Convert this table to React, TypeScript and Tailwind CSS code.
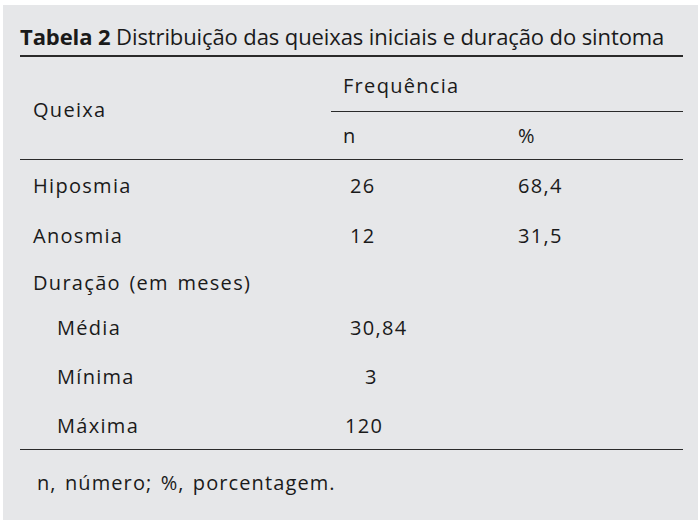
import React from "react";

export default function App() {
  const font = { fontFamily: '"Open Sans", "Liberation Sans", sans-serif' };
  return (
    <div className="w-[700px] h-[532px] bg-white pt-[5px] pl-[3px]" style={font}>
      <div className="w-[695px] h-[515px] bg-[#e6e7e9] pl-[17px] pr-[15px] text-[#1a1a1a] flex flex-col">
        <div className="h-[50px] flex items-end pb-[8px] text-[22px] leading-none whitespace-nowrap tracking-[-0.1px]">
          <span className="font-bold">Tabela 2</span>
          <span>&nbsp;Distribuição das queixas iniciais e duração do sintoma</span>
        </div>
        <div className="h-[2px] bg-[#2a2a2a]" />
        <div className="flex h-[103px] text-[20px] tracking-[1.3px] [word-spacing:2px]">
          <div className="w-[311px] pl-[13px] flex items-center pt-[3px]">Queixa</div>
          <div className="flex-1 flex flex-col">
            <div className="h-[54px] flex items-center pl-[12px] pt-[4px]">Frequência</div>
            <div className="h-px bg-[#2a2a2a]" />
            <div className="flex-1 flex items-center">
              <div className="w-[187px] pl-[12px]">n</div>
              <div>%</div>
            </div>
          </div>
        </div>
        <div className="h-px bg-[#2a2a2a]" />
        <div className="flex flex-col text-[20px] tracking-[1.3px] [word-spacing:2px]">
          <Row h="h-[51px]" label="Hiposmia" n="26" p="68,4" />
          <Row h="h-[50px]" label="Anosmia" n="12" p="31,5" />
          <Row h="h-[43px]" label="Duração (em meses)" n="" p="" />
          <Row h="h-[48px]" label="Média" n="30,84" p="" indent />
          <Row h="h-[50px]" label="Mínima" n="3" p="" indent nPad="pl-[34px]" />
          <Row h="h-[47px]" label="Máxima" n="120" p="" indent nPad="pl-[14px]" />
        </div>
        <div className="h-px bg-[#2a2a2a]" />
        <div className="h-[70px] flex items-center pl-[17px] text-[20px] pb-[5px] tracking-[1.1px] [word-spacing:2px]">
          n, número; %, porcentagem.
        </div>
      </div>
    </div>
  );
}

function Row({
  h,
  label,
  n,
  p,
  indent,
  nPad,
}: {
  h: string;
  label: string;
  n: string;
  p: string;
  indent?: boolean;
  nPad?: string;
}) {
  return (
    <div className={`${h} flex items-center`}>
      <div className={`w-[311px] ${indent ? "pl-[37px]" : "pl-[13px]"}`}>{label}</div>
      <div className={`w-[187px] ${nPad ?? "pl-[19px]"}`}>{n}</div>
      <div>{p}</div>
    </div>
  );
}
